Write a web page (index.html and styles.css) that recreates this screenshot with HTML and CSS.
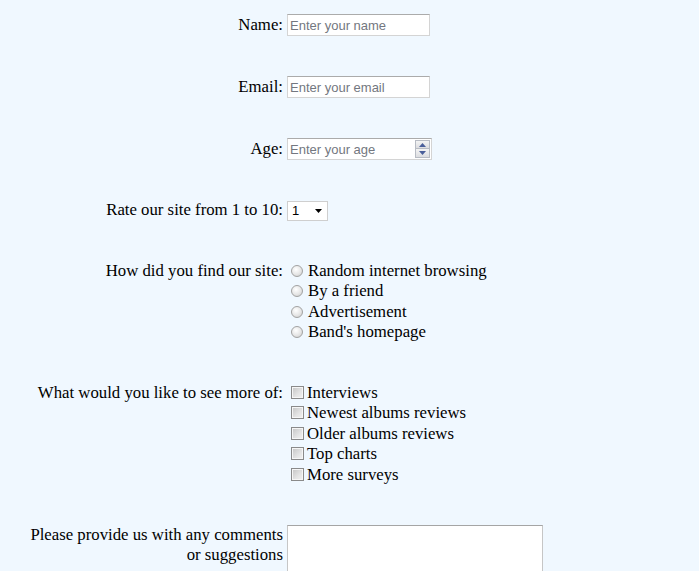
FILE: index.html
```html
<!DOCTYPE html>
<html>
<head>
<meta charset="utf-8">
<link rel="stylesheet" href="styles.css">
</head>
<body>
<form class="survey">
  <label class="lbl" for="name">Name:</label>
  <div class="field"><input class="text" id="name" type="text" placeholder="Enter your name"></div>

  <label class="lbl" for="email">Email:</label>
  <div class="field"><input class="text" id="email" type="text" placeholder="Enter your email"></div>

  <label class="lbl" for="age">Age:</label>
  <div class="field">
    <span class="number">
      <input class="num-input" id="age" type="text" placeholder="Enter your age">
      <span class="spin">
        <span class="spin-btn"><svg width="7" height="4" viewBox="0 0 7 4"><path d="M0 4 L3.5 0 L7 4 Z" fill="#4a5f9a"/></svg></span>
        <span class="spin-btn"><svg width="7" height="4" viewBox="0 0 7 4"><path d="M0 0 L3.5 4 L7 0 Z" fill="#4a5f9a"/></svg></span>
      </span>
    </span>
  </div>

  <label class="lbl" for="rate">Rate our site from 1 to 10:</label>
  <div class="field">
    <span class="select">
      <span class="sel-val">1</span>
      <svg class="caret" width="7" height="4" viewBox="0 0 7 4"><path d="M0 0 L7 0 L3.5 4 Z" fill="#000"/></svg>
    </span>
  </div>

  <div class="lbl">How did you find our site:</div>
  <div class="field options">
    <label class="opt"><span class="radio"></span><span class="rtext">Random internet browsing</span></label>
    <label class="opt"><span class="radio"></span><span class="rtext">By a friend</span></label>
    <label class="opt"><span class="radio"></span><span class="rtext">Advertisement</span></label>
    <label class="opt"><span class="radio"></span><span class="rtext">Band's homepage</span></label>
  </div>

  <div class="lbl">What would you like to see more of:</div>
  <div class="field options">
    <label class="opt"><span class="check"></span><span class="ctext">Interviews</span></label>
    <label class="opt"><span class="check"></span><span class="ctext">Newest albums reviews</span></label>
    <label class="opt"><span class="check"></span><span class="ctext">Older albums reviews</span></label>
    <label class="opt"><span class="check"></span><span class="ctext">Top charts</span></label>
    <label class="opt"><span class="check"></span><span class="ctext">More surveys</span></label>
  </div>

  <label class="lbl lbl-top" for="comments">Please provide us with any comments or suggestions</label>
  <div class="field field-top"><textarea id="comments" class="area"></textarea></div>
</form>
</body>
</html>
```
FILE: styles.css
```css
html, body {
  background: #f0f8ff;
}
body {
  margin: 8px;
  padding-top: 6px;
  font-family: "Liberation Serif", "Times New Roman", serif;
  font-size: 16.75px;
  color: #000;
}
.survey {
  display: grid;
  grid-template-columns: 262px auto;
  column-gap: 4px;
  row-gap: 40px;
  align-items: baseline;
  justify-content: start;
  padding-left: 13px;
}
.lbl {
  text-align: right;
}
.lbl-top {
  align-self: start;
  line-height: 20px;
}
.field-top {
  align-self: start;
}
.field {
  display: block;
}
.text {
  box-sizing: border-box;
  width: 143px;
  height: 22px;
  margin: 0;
  padding: 0 2px;
  border: 1px solid #d4d4d4;
  border-top-color: #ababab;
  background: #fff;
  font-family: "Liberation Sans", Arial, sans-serif;
  font-size: 13px;
  outline: none;
}
.text::placeholder, .num-input::placeholder {
  color: #737780;
}
.number {
  box-sizing: border-box;
  display: inline-flex;
  align-items: center;
  width: 145px;
  height: 22px;
  border: 1px solid #d4d4d4;
  border-top-color: #ababab;
  background: #fff;
}
.num-input {
  flex: 1;
  min-width: 0;
  height: 20px;
  margin: 0;
  padding: 0 2px;
  border: 0;
  background: transparent;
  font-family: "Liberation Sans", Arial, sans-serif;
  font-size: 13px;
  outline: none;
}
.spin {
  display: flex;
  flex-direction: column;
  width: 15px;
  margin-right: 1px;
}
.spin-btn {
  box-sizing: border-box;
  height: 9px;
  display: flex;
  align-items: center;
  justify-content: center;
  border: 1px solid #b8bcc4;
  background: linear-gradient(#f4f4f4, #dcdde0);
}
.spin-btn + .spin-btn {
  border-top: 0;
  height: 9px;
}
.select {
  box-sizing: border-box;
  display: inline-flex;
  align-items: center;
  justify-content: space-between;
  width: 41px;
  height: 20px;
  padding: 0 5px 0 4px;
  border: 1px solid #cfcfcf;
  background: #fff;
  font-family: "Liberation Sans", Arial, sans-serif;
  font-size: 13px;
  vertical-align: baseline;
}
.options {
  display: flex;
  flex-direction: column;
  line-height: 20.5px;
}
.opt {
  display: block;
  height: 20.5px;
  white-space: nowrap;
}
.radio {
  display: inline-block;
  box-sizing: border-box;
  width: 12px;
  height: 12px;
  margin: 0 5px 0 4px;
  border: 1px solid #a2a2a2;
  border-radius: 50%;
  background: radial-gradient(circle at 40% 35%, #ffffff 0%, #e6e6e6 55%, #c9c9c9 100%);
  vertical-align: -1px;
}
.check {
  display: inline-block;
  box-sizing: border-box;
  width: 13px;
  height: 13px;
  margin: 0 3px 0 4px;
  border: 1px solid #8a8a8a;
  box-shadow: inset 0 0 0 1px #f6f6f6;
  background: linear-gradient(135deg, #c4c4c4 0%, #e4e4e4 60%, #f2f2f2 100%);
  vertical-align: -1px;
}
.area {
  box-sizing: border-box;
  display: block;
  width: 256px;
  height: 60px;
  margin: 0;
  padding: 2px;
  border: 1px solid #c6c6c6;
  border-top-color: #a5a5a5;
  background: #fff;
  resize: none;
  outline: none;
}
```
